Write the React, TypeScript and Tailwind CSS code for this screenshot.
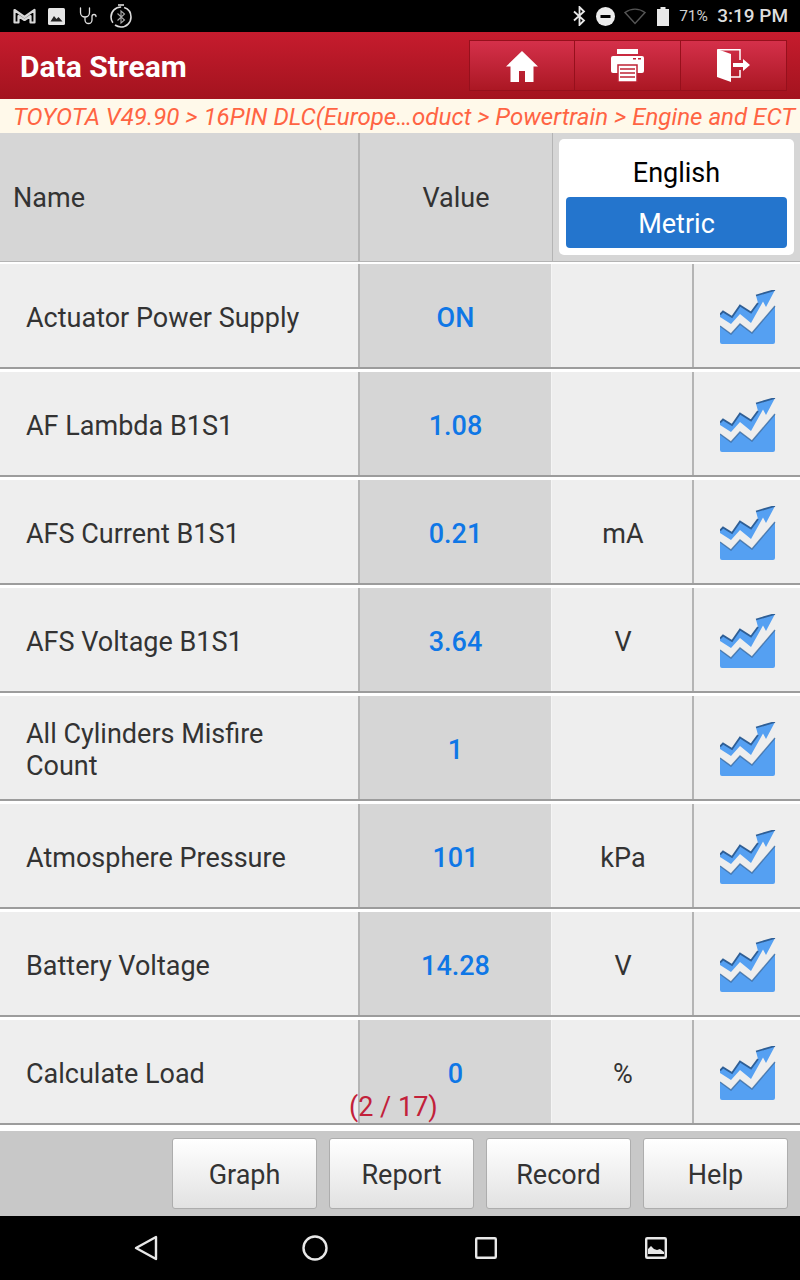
const ROWS = [
  { name: "Actuator Power Supply", value: "ON", unit: "" },
  { name: "AF Lambda B1S1", value: "1.08", unit: "" },
  { name: "AFS Current B1S1", value: "0.21", unit: "mA" },
  { name: "AFS Voltage B1S1", value: "3.64", unit: "V" },
  { name: "All Cylinders Misfire Count", value: "1", unit: "" },
  { name: "Atmosphere Pressure", value: "101", unit: "kPa" },
  { name: "Battery Voltage", value: "14.28", unit: "V" },
  { name: "Calculate Load", value: "0", unit: "%" },
];

const ACTIONS = ["Graph", "Report", "Record", "Help"];

function ChartIcon() {
  return (
    <svg width="56" height="55" viewBox="0 0 56 55">
      <path
        d="M0 24.500 3 21.500 12 27 20 15.500 31 22.500 38 13 36 5.500 55 0 46 17 43 11.500 31 33 20 24 11 34 0 27Z"
        fill="#55a0f2"
      />
      <path
        d="M0 24.500 3 21.500 12 27 20 15.500 31 22.500 38 13M36 5.500 55 0"
        fill="none"
        stroke="#2f5f96"
        strokeWidth="1.800"
      />
      <path d="M0 36 11 44 20 34 32 43 55 16V52a2 2 0 0 1-2 2H2a2 2 0 0 1-2-2Z" fill="#55a0f2" />
      <path d="M0 36 11 44 20 34 32 43 55 16" fill="none" stroke="#2f5f96" strokeWidth="1.400" strokeOpacity="0.7" />
    </svg>
  );
}

function StatusBar() {
  return (
    <div className="flex h-[32px] items-center bg-black pl-[13px] pr-[12px]">
      <svg width="23" height="16" viewBox="0 0 23 16" fill="none" stroke="#d8d8d8" strokeWidth="2.200" strokeLinejoin="round">
        <path d="M1.500 14.500V2l10 7 10-7v12.500h-4V8l-6 4-6-4v6.500Z" />
      </svg>
      <svg className="ml-[12px]" width="17" height="17" viewBox="0 0 17 17">
        <rect width="17" height="17" rx="1.500" fill="#e6e6e6" />
        <path d="M2.500 13.500 6 8l2.500 3 2-2 4 4.500Z" fill="#222" />
      </svg>
      <svg className="ml-[14px]" width="19" height="18" viewBox="0 0 19 18" fill="none" stroke="#e0e0e0" strokeWidth="1.300" strokeLinecap="round">
        <path d="M1.500 1v4.500a4.500 4.500 0 0 0 9 0V1M6 10v3a3.500 3.500 0 0 0 7 0V9.500a2 2 0 0 1 4 0" />
      </svg>
      <svg className="ml-[12px]" width="22" height="24" viewBox="0 0 22 24" fill="none" stroke="#dcdcdc">
        <circle cx="11" cy="13" r="10" strokeWidth="1.600" strokeDasharray="22 3" />
        <path d="M8 1h6" strokeWidth="1.600" />
        <path d="M7.500 9.500 14.500 16 11 19V7l3.500 3-7 6.500" strokeWidth="1.100" stroke="#aaa" />
      </svg>
      <div className="ml-auto flex items-center">
        <svg width="13" height="20" viewBox="0 0 13 20" fill="none" stroke="#e8e8e8" strokeWidth="1.800">
          <path d="M1 5.500 11 14.500 6.500 19V1L11 5.500 1 14.500" />
        </svg>
        <svg className="ml-[10px]" width="19" height="19" viewBox="0 0 19 19">
          <circle cx="9.500" cy="9.500" r="9.500" fill="#ececec" />
          <rect x="4.500" y="8" width="10" height="3" fill="#000" />
        </svg>
        <svg className="ml-[9px]" width="22" height="17" viewBox="0 0 22 17" fill="none" stroke="#555" strokeWidth="1.400">
          <path d="M1 4.500C7 0 15 0 21 4.500L11 15.500Z" />
        </svg>
        <svg className="ml-[11px]" width="12" height="19" viewBox="0 0 12 19">
          <path d="M3.500 0h5v2H12v17H0V2h3.500Z" fill="#e8e8e8" />
        </svg>
        <span className="ml-[10px] w-[29px] pt-[1px] text-[15.500px] text-[#cfcfcf]">71%</span>
        <span className="ml-[9px] pt-[1px] text-[19px] font-medium text-[#dedede]">3:19 PM</span>
      </div>
    </div>
  );
}

function Header() {
  return (
    <div className="flex h-[67px] items-center justify-between bg-gradient-to-b from-[#c61c2e] to-[#a3131e] pl-[20px] pr-[13px]">
      <h1 className="pt-[1px] text-[30px] font-bold text-white">Data Stream</h1>
      <div className="flex h-[51px]">
        <button className="flex w-[106px] items-center justify-center border border-[#96101c] bg-gradient-to-b from-[#d5304a] to-[#ab1723]">
          <svg width="32" height="32" viewBox="0 0 32 32" fill="#fff">
            <path d="M16 1 32 16.500h-4.500V32H19V21h-6v11H4.500V16.500H0Z" />
          </svg>
        </button>
        <button className="flex w-[106px] items-center justify-center border border-l-0 border-[#96101c] bg-gradient-to-b from-[#d5304a] to-[#ab1723]">
          <svg width="33" height="33" viewBox="0 0 33 33">
            <rect x="6" y="0" width="21" height="5" fill="#fff" />
            <path d="M2 7h29a2 2 0 0 1 2 2v13a2 2 0 0 1-2 2H2a2 2 0 0 1-2-2V9a2 2 0 0 1 2-2Z" fill="#fff" />
            <rect x="7" y="16" width="19" height="17" fill="#fff" stroke="#c02336" strokeWidth="1.500" />
            <path d="M9 20h15M9 24h15M9 28h15" stroke="#c02336" strokeWidth="1.500" />
            <rect x="22" y="9" width="3" height="1.500" fill="#c02336" />
            <rect x="27" y="9" width="3" height="1.500" fill="#c02336" />
          </svg>
        </button>
        <button className="flex w-[106px] items-center justify-center border border-l-0 border-[#96101c] bg-gradient-to-b from-[#d5304a] to-[#ab1723]">
          <svg width="33" height="33" viewBox="0 0 33 33">
            <path d="M0 0 14 5V33L0 28Z" fill="#fff" />
            <path d="M1 .8H23V11M23 21V28H14" fill="none" stroke="#fff" strokeWidth="1.500" />
            <path d="M16 14h10V10l7 6-7 6v-4H16Z" fill="#fff" />
          </svg>
        </button>
      </div>
    </div>
  );
}

function TableHead() {
  return (
    <div className="grid h-[131px] grid-cols-[360px_193px_247px] border-b-[3px] border-b-white bg-[#d6d6d6] text-[27px] text-[#333]">
      <div className="flex items-center border-r-2 border-b border-[#b4b4b4] pl-[13px] pt-[2px]">Name</div>
      <div className="flex items-center justify-center border-r border-b border-[#b4b4b4] pt-[2px]">Value</div>
      <div className="border-b border-[#b4b4b4] p-[6px]">
        <div className="flex h-[116px] flex-col rounded-[5px] bg-white px-[7px] pb-[7px]">
          <div className="flex h-[58px] items-center justify-center pt-[11px] text-black">English</div>
          <div className="flex h-[51px] items-center justify-center rounded-[4px] bg-[#2475cd] pt-[4px] text-white">
            Metric
          </div>
        </div>
      </div>
    </div>
  );
}

function Row({ name, value, unit }: { name: string; value: string; unit: string }) {
  return (
    <div className="h-[108px] border-b-[3px] border-b-white">
      <div className="grid h-full grid-cols-[360px_192px_142px_106px] border-b-2 border-b-[#9c9c9c] bg-[#eeeeee] text-[27px] text-[#333]">
        <div className="flex items-center border-r-2 border-[#b4b4b4] pl-[26px] pr-[40px] pt-[4px] leading-[32px]">{name}</div>
        <div className="flex items-center justify-center border-r border-[#f4f4f4] bg-[#d6d6d6] pt-[6px] font-medium text-[#0f77e6]">
          {value}
        </div>
        <div className="flex items-center justify-center border-r-2 border-[#b4b4b4] pl-[2px] pt-[6px]">{unit}</div>
        <div className="flex items-center justify-center pl-[2px] pt-[4px]">
          <ChartIcon />
        </div>
      </div>
    </div>
  );
}

function ActionBar() {
  return (
    <div className="flex h-[85px] justify-end gap-[12px] bg-[#c8c8c8] pr-[12px] pt-[7px]">
      {ACTIONS.map((label) => (
        <button
          key={label}
          className="h-[71px] w-[145px] rounded-[3px] border border-[#adadad] bg-gradient-to-b from-white to-[#e2e2e2] pt-[4px] text-[27px] text-[#333]"
        >
          {label}
        </button>
      ))}
    </div>
  );
}

function NavBar() {
  return (
    <div className="flex h-[64px] items-center bg-black">
      <svg className="ml-[134px]" width="24" height="26" viewBox="0 0 24 26" fill="none" stroke="#e8e8e8" strokeWidth="2.400" strokeLinejoin="round">
        <path d="M22 2V24L2 13Z" />
      </svg>
      <svg className="ml-[144px]" width="26" height="26" viewBox="0 0 26 26" fill="none" stroke="#e8e8e8" strokeWidth="2.400">
        <circle cx="13" cy="13" r="11.500" />
      </svg>
      <svg className="ml-[147px]" width="22" height="22" viewBox="0 0 22 22" fill="none" stroke="#e8e8e8" strokeWidth="2.400" strokeLinejoin="round">
        <rect x="1.200" y="1.200" width="19.600" height="19.600" rx="1" />
      </svg>
      <svg className="ml-[148px]" width="22" height="22" viewBox="0 0 22 22">
        <rect x="1.200" y="1.200" width="19.600" height="19.600" rx="1" fill="none" stroke="#e8e8e8" strokeWidth="2.400" />
        <path d="M3 17V12l3-3 3 3 3 1 3-1 4 3v2Z" fill="#e8e8e8" />
      </svg>
    </div>
  );
}

export default function App() {
  return (
    <div className="relative h-[1280px] w-[800px] overflow-hidden bg-white font-['Roboto',sans-serif]">
      <StatusBar />
      <Header />
      <div className="flex h-[34px] items-center whitespace-nowrap bg-[#fff9ea] pl-[13px] pt-[2px] text-[24.100px] italic text-[#ff6443]">
        TOYOTA V49.90 &gt; 16PIN DLC(Europe…oduct &gt; Powertrain &gt; Engine and ECT
      </div>
      <TableHead />
      {ROWS.map((row) => (
        <Row key={row.name} {...row} />
      ))}
      <div className="h-[3px]" />
      <ActionBar />
      <NavBar />
      <span className="absolute left-[349px] top-[1087px] text-[27px] text-[#c2213a]">(2 / 17)</span>
    </div>
  );
}
